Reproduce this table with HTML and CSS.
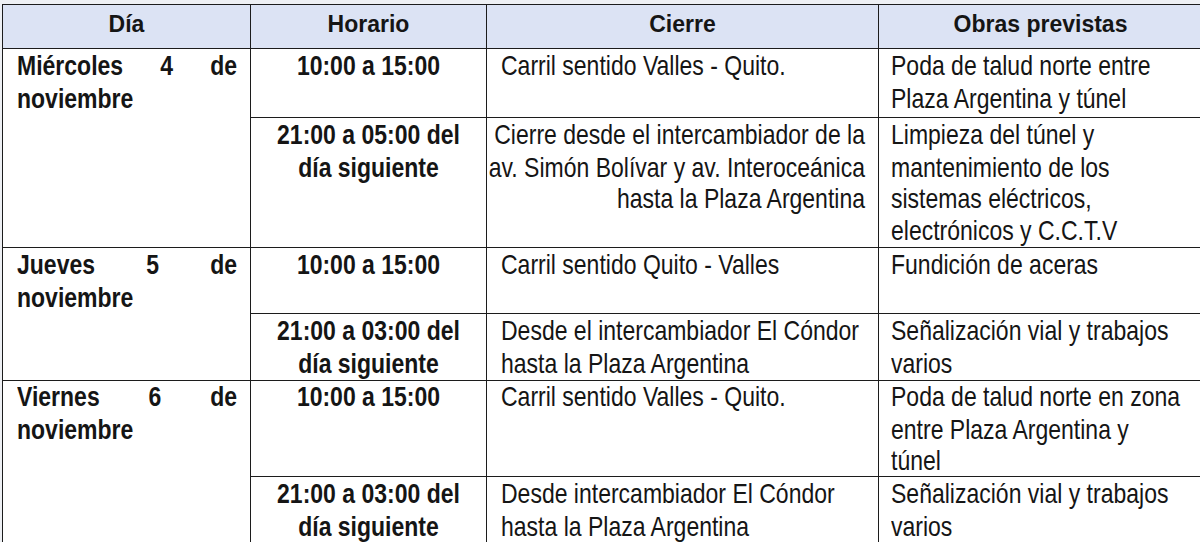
FILE: index.html
```html
<!DOCTYPE html>
<html lang="es">
<head>
<meta charset="utf-8">
<title>Cierres túnel</title>
<link rel="stylesheet" href="styles.css">
</head>
<body>
<table class="schedule">
  <colgroup>
    <col class="c-day">
    <col class="c-time">
    <col class="c-close">
    <col class="c-works">
  </colgroup>
  <thead>
    <tr class="head">
      <th>Día</th>
      <th>Horario</th>
      <th>Cierre</th>
      <th>Obras previstas</th>
    </tr>
  </thead>
  <tbody>
    <tr class="r1">
      <td class="day" rowspan="2"><div class="t">Miércoles 4 de noviembre</div></td>
      <td class="time"><div class="t">10:00 a 15:00</div></td>
      <td class="close"><div class="t">Carril sentido Valles - Quito.</div></td>
      <td class="works"><div class="t">Poda de talud norte entre Plaza Argentina y túnel</div></td>
    </tr>
    <tr class="r2">
      <td class="time"><div class="t">21:00 a 05:00 del día siguiente</div></td>
      <td class="close right"><div class="t">Cierre desde el intercambiador de la av. Simón Bolívar y av. Interoceánica hasta la Plaza Argentina</div></td>
      <td class="works"><div class="t">Limpieza del túnel y mantenimiento de los sistemas eléctricos, electrónicos y C.C.T.V</div></td>
    </tr>
    <tr class="r3">
      <td class="day" rowspan="2"><div class="t">Jueves 5 de noviembre</div></td>
      <td class="time"><div class="t">10:00 a 15:00</div></td>
      <td class="close"><div class="t">Carril sentido Quito - Valles</div></td>
      <td class="works"><div class="t">Fundición de aceras</div></td>
    </tr>
    <tr class="r4">
      <td class="time"><div class="t">21:00 a 03:00 del día siguiente</div></td>
      <td class="close"><div class="t">Desde el intercambiador El Cóndor hasta la Plaza Argentina</div></td>
      <td class="works"><div class="t">Señalización vial y trabajos varios</div></td>
    </tr>
    <tr class="r5">
      <td class="day" rowspan="2"><div class="t">Viernes 6 de noviembre</div></td>
      <td class="time"><div class="t">10:00 a 15:00</div></td>
      <td class="close"><div class="t">Carril sentido Valles - Quito.</div></td>
      <td class="works"><div class="t">Poda de talud norte en zona entre Plaza Argentina y túnel</div></td>
    </tr>
    <tr class="r6">
      <td class="time"><div class="t">21:00 a 03:00 del día siguiente</div></td>
      <td class="close"><div class="t">Desde intercambiador El Cóndor hasta la Plaza Argentina</div></td>
      <td class="works"><div class="t">Señalización vial y trabajos varios</div></td>
    </tr>
  </tbody>
</table>
</body>
</html>
```

FILE: styles.css
```css
html, body {
  margin: 0;
  padding: 0;
}
body {
  background: #eef0f4;
  overflow: hidden;
  height: 542px;
  font-family: "Liberation Sans", Arial, sans-serif;
  color: #151515;
}
.schedule {
  margin: 4px 0 0 2px;
  width: 1200px;
  table-layout: fixed;
  border-collapse: collapse;
  background: #ffffff;
  font-size: 23px;
  line-height: 32px;
}
.c-day { width: 248px; }
.c-time { width: 236px; }
.c-close { width: 392px; }
.c-works { width: 324px; }

.schedule th,
.schedule td {
  border: 1px solid #1c1c1c;
  vertical-align: top;
}
.schedule th {
  background: #dce3f4;
  font-weight: bold;
  text-align: center;
  height: 44px;
  padding: 3px 0 0 0;
  box-sizing: border-box;
}
/* body text is a tall, condensed face: stretch Arial-metric text vertically */
.t {
  line-height: 26.667px;
  transform: scaleY(1.2);
  transform-origin: 0 0;
}
.schedule td.day {
  font-weight: bold;
  text-align: justify;
  padding: 1px 13px 0 14px;
}
.schedule td.time {
  font-weight: bold;
  text-align: center;
  padding: 1px 20px 0 20px;
}
.schedule td.close {
  text-align: left;
  padding: 1px 10px 0 14px;
}
.schedule td.close.right {
  text-align: right;
  padding: 1px 13px 0 0;
}
.schedule td.works {
  text-align: left;
  padding: 1px 18px 0 12px;
}
.schedule .r5 td.day,
.schedule .r5 td.time,
.schedule .r5 td.close,
.schedule .r5 td.works {
  padding-top: 0;
}
.r1 td { height: 67px; }
.r2 td { height: 128px; }
.r3 td { height: 64px; }
.r4 td { height: 65px; }
.r5 td { height: 95px; }
.r6 td { height: 66px; }
```
